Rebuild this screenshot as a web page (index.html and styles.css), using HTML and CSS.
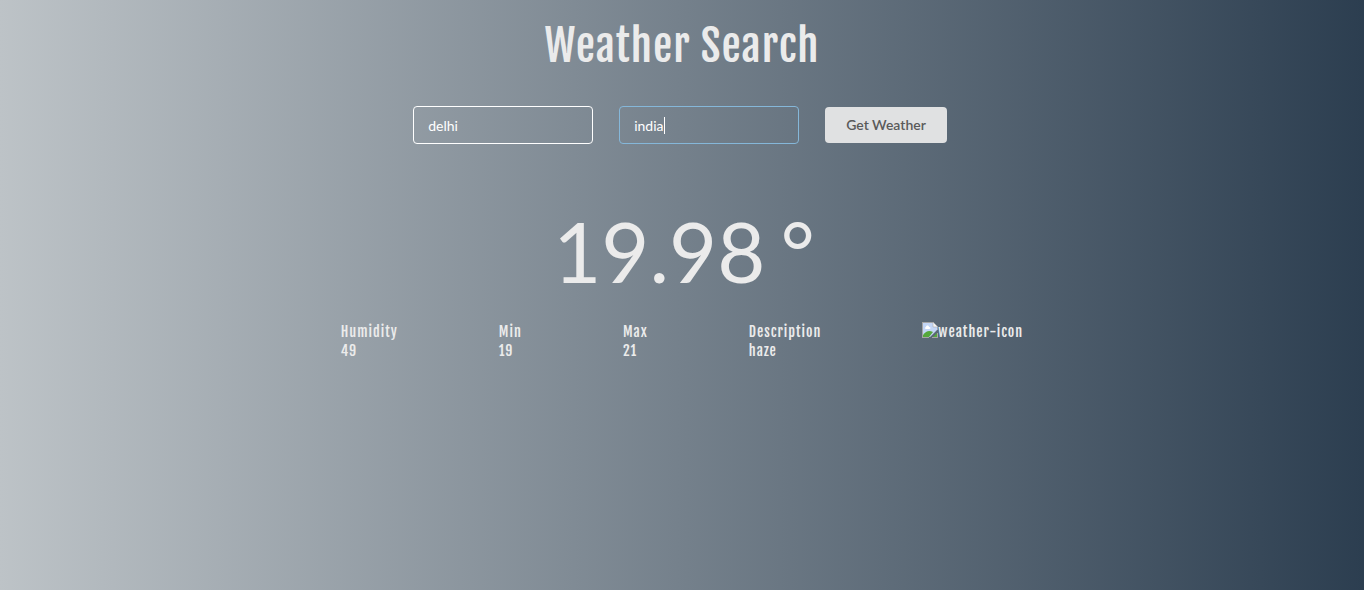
FILE: index.html
```html
<!DOCTYPE html>
<html lang="en">
<head>
<meta charset="utf-8">
<title>Weather Search</title>
<link rel="stylesheet" href="styles.css">
</head>
<body>
<main class="page">
  <h1 class="title">Weather Search</h1>
  <form class="search">
    <input class="field" type="text" aria-label="City" value="delhi">
    <div class="active-wrap">
      <input class="field field-active" type="text" aria-label="Country" value="india">
      <span class="caret"></span>
    </div>
    <button class="submit" type="button">Get Weather</button>
  </form>
  <p class="temperature"><span>19.98</span> <span>°</span></p>
  <dl class="details">
    <div><dt>Humidity</dt><dd>49</dd></div>
    <div><dt>Min</dt><dd>19</dd></div>
    <div><dt>Max</dt><dd>21</dd></div>
    <div><dt>Description</dt><dd>haze</dd></div>
    <div class="weather-icon">
      <svg width="16" height="16" viewBox="0 0 16 16" aria-hidden="true">
        <path d="M1 1h10v4h4v3L8 15H1z" fill="#c3d6f6"/>
        <path d="M3 6c0-1 1-1 1-1 0-2 3-2 3 0 2 0 2 2 0 2H4C3 7 3 6 3 6z" fill="#fff"/>
        <path d="M1 15v-2c3-4 6-5 10-3l-4 5z" fill="#55a83c"/>
        <path d="M11 15l4-4v4z" fill="#55a83c"/>
        <path d="M0 0h11v1H1v14h6v1H0zM15 5h1v3h-1zM10 15h6v1h-6zM15 11h1v5h-1z" fill="#a5a5a5"/>
        <path d="M11 0l5 5h-5z" fill="#f4f4f4" stroke="#a5a5a5" stroke-width=".5"/>
      </svg><span>weather-icon</span>
    </div>
  </dl>
</main>
</body>
</html>
```

FILE: styles.css
```css
* { box-sizing: border-box; }
body {
  margin: 0;
  min-height: 100vh;
  background: linear-gradient(to right, #bdc3c7, #2c3e50);
  color: #ebebeb;
  font-family: Lato, sans-serif;
}
.page { display: flex; flex-direction: column; align-items: center; }
.title {
  margin: 18px 0 0;
  font: 400 43px/56px "Fjalla One", "Open Sans", sans-serif;
  letter-spacing: 1px;
}
.search { display: flex; align-items: center; gap: 26px; margin-top: 32px; padding-right: 4px; }
.field {
  display: block;
  width: 180px; height: 38px; padding: 0 14px;
  border: 1px solid #fff; border-radius: 4px; outline: 0;
  background: transparent; color: #fff;
  font: 14px/18px Lato, sans-serif;
}
.active-wrap { position: relative; }
.caret { position: absolute; left: 45px; top: 11px; width: 1px; height: 17px; background: #fff; }
.field-active { border-color: #85b7d9; }
.submit {
  height: 36px; padding: 0 21px; border: 0; border-radius: 4px;
  background: #e0e1e2; color: #5a5a5a;
  font: 600 14px/14px Lato, sans-serif;
}
.temperature {
  display: flex; gap: 15px; margin: 58px 0 0; padding-left: 4px;
  font-size: 83px; line-height: 98px;
}
.details {
  display: flex; gap: 101px; margin: 22px 0 0;
  font: 400 14px/19px "Fjalla One", "Open Sans", sans-serif;
  letter-spacing: 1px;
}
dd { margin: 0; }
.weather-icon { display: flex; align-items: flex-start; }
```
